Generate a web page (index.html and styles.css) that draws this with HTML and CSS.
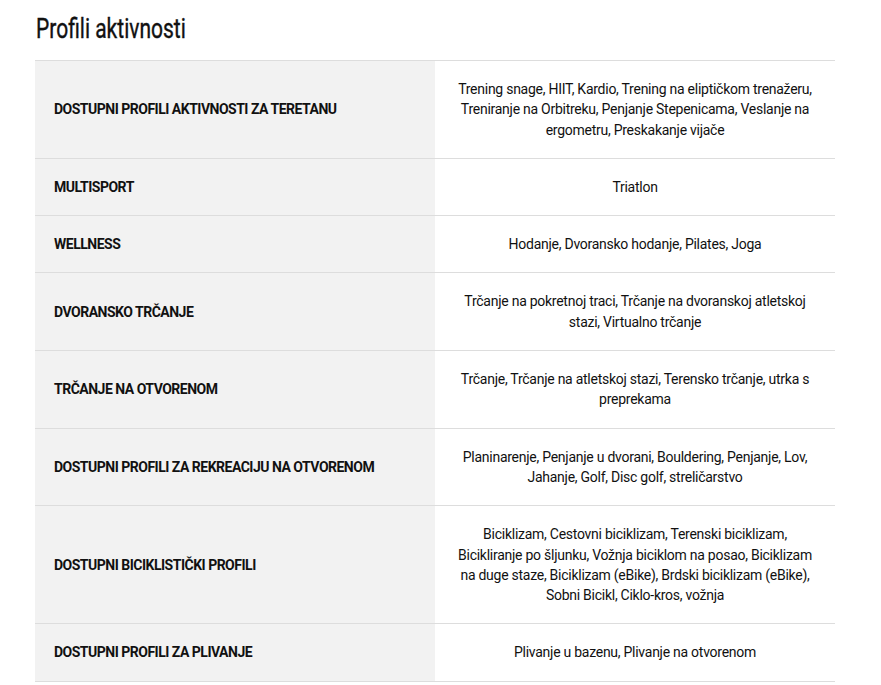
FILE: index.html
```html
<!DOCTYPE html>
<html lang="hr">
<head>
<meta charset="utf-8">
<title>Profili aktivnosti</title>
<link rel="stylesheet" href="styles.css">
</head>
<body>
<section class="specs">
  <h2 class="specs-title"><span class="specs-title-text">Profili aktivnosti</span></h2>
  <table class="specs-table">
    <colgroup>
      <col class="col-label">
      <col class="col-value">
    </colgroup>
    <tbody>
      <tr>
        <th>DOSTUPNI PROFILI AKTIVNOSTI ZA TERETANU</th>
        <td>Trening snage, HIIT, Kardio, Trening na eliptičkom trenažeru, Treniranje na Orbitreku, Penjanje Stepenicama, Veslanje na ergometru, Preskakanje vijače</td>
      </tr>
      <tr>
        <th>MULTISPORT</th>
        <td>Triatlon</td>
      </tr>
      <tr>
        <th>WELLNESS</th>
        <td>Hodanje, Dvoransko hodanje, Pilates, Joga</td>
      </tr>
      <tr>
        <th>DVORANSKO TRČANJE</th>
        <td>Trčanje na pokretnoj traci, Trčanje na dvoranskoj atletskoj stazi, Virtualno trčanje</td>
      </tr>
      <tr>
        <th>TRČANJE NA OTVORENOM</th>
        <td>Trčanje, Trčanje na atletskoj stazi, Terensko trčanje, utrka s preprekama</td>
      </tr>
      <tr>
        <th>DOSTUPNI PROFILI ZA REKREACIJU NA OTVORENOM</th>
        <td>Planinarenje, Penjanje u dvorani, Bouldering, Penjanje, Lov, Jahanje, Golf, Disc golf, streličarstvo</td>
      </tr>
      <tr>
        <th>DOSTUPNI BICIKLISTIČKI PROFILI</th>
        <td>Biciklizam, Cestovni biciklizam, Terenski biciklizam, Bicikliranje po šljunku, Vožnja biciklom na posao, Biciklizam na duge staze, Biciklizam (eBike), Brdski biciklizam (eBike), Sobni Bicikl, Ciklo-kros, vožnja</td>
      </tr>
      <tr>
        <th>DOSTUPNI PROFILI ZA PLIVANJE</th>
        <td>Plivanje u bazenu, Plivanje na otvorenom</td>
      </tr>
    </tbody>
  </table>
</section>
</body>
</html>
```

FILE: styles.css
```css
html, body {
  margin: 0;
  padding: 0;
  background: #ffffff;
}

body {
  font-family: Roboto, "Liberation Sans", Arial, sans-serif;
  color: #111111;
}

.specs {
  padding: 12px 46px 0 35px;
}

.specs-title {
  margin: 0 0 14px 1px;
  font-family: Roboto, "Liberation Sans", sans-serif;
  font-weight: 400;
  font-size: 28px;
  line-height: 34px;
  color: #111111;
  white-space: nowrap;
}

.specs-title-text {
  display: inline-block;
  transform: scaleX(0.75);
  transform-origin: left center;
  -webkit-text-stroke: 0.4px #111111;
}

.specs-table {
  width: 800px;
  border-collapse: collapse;
  table-layout: fixed;
  font-size: 14px;
  line-height: 20.3px;
}

.col-label,
.col-value {
  width: 400px;
}

.specs-table tr {
  border-top: 1px solid #dddddd;
  border-bottom: 1px solid #dddddd;
}

.specs-table th {
  background: #f2f2f2;
  text-align: left;
  font-weight: 700;
  padding: 18px 19px;
  vertical-align: middle;
  letter-spacing: -0.5px;
}

.specs-table td {
  text-align: center;
  padding: 18px 18px;
  vertical-align: middle;
  letter-spacing: -0.26px;
}
```
